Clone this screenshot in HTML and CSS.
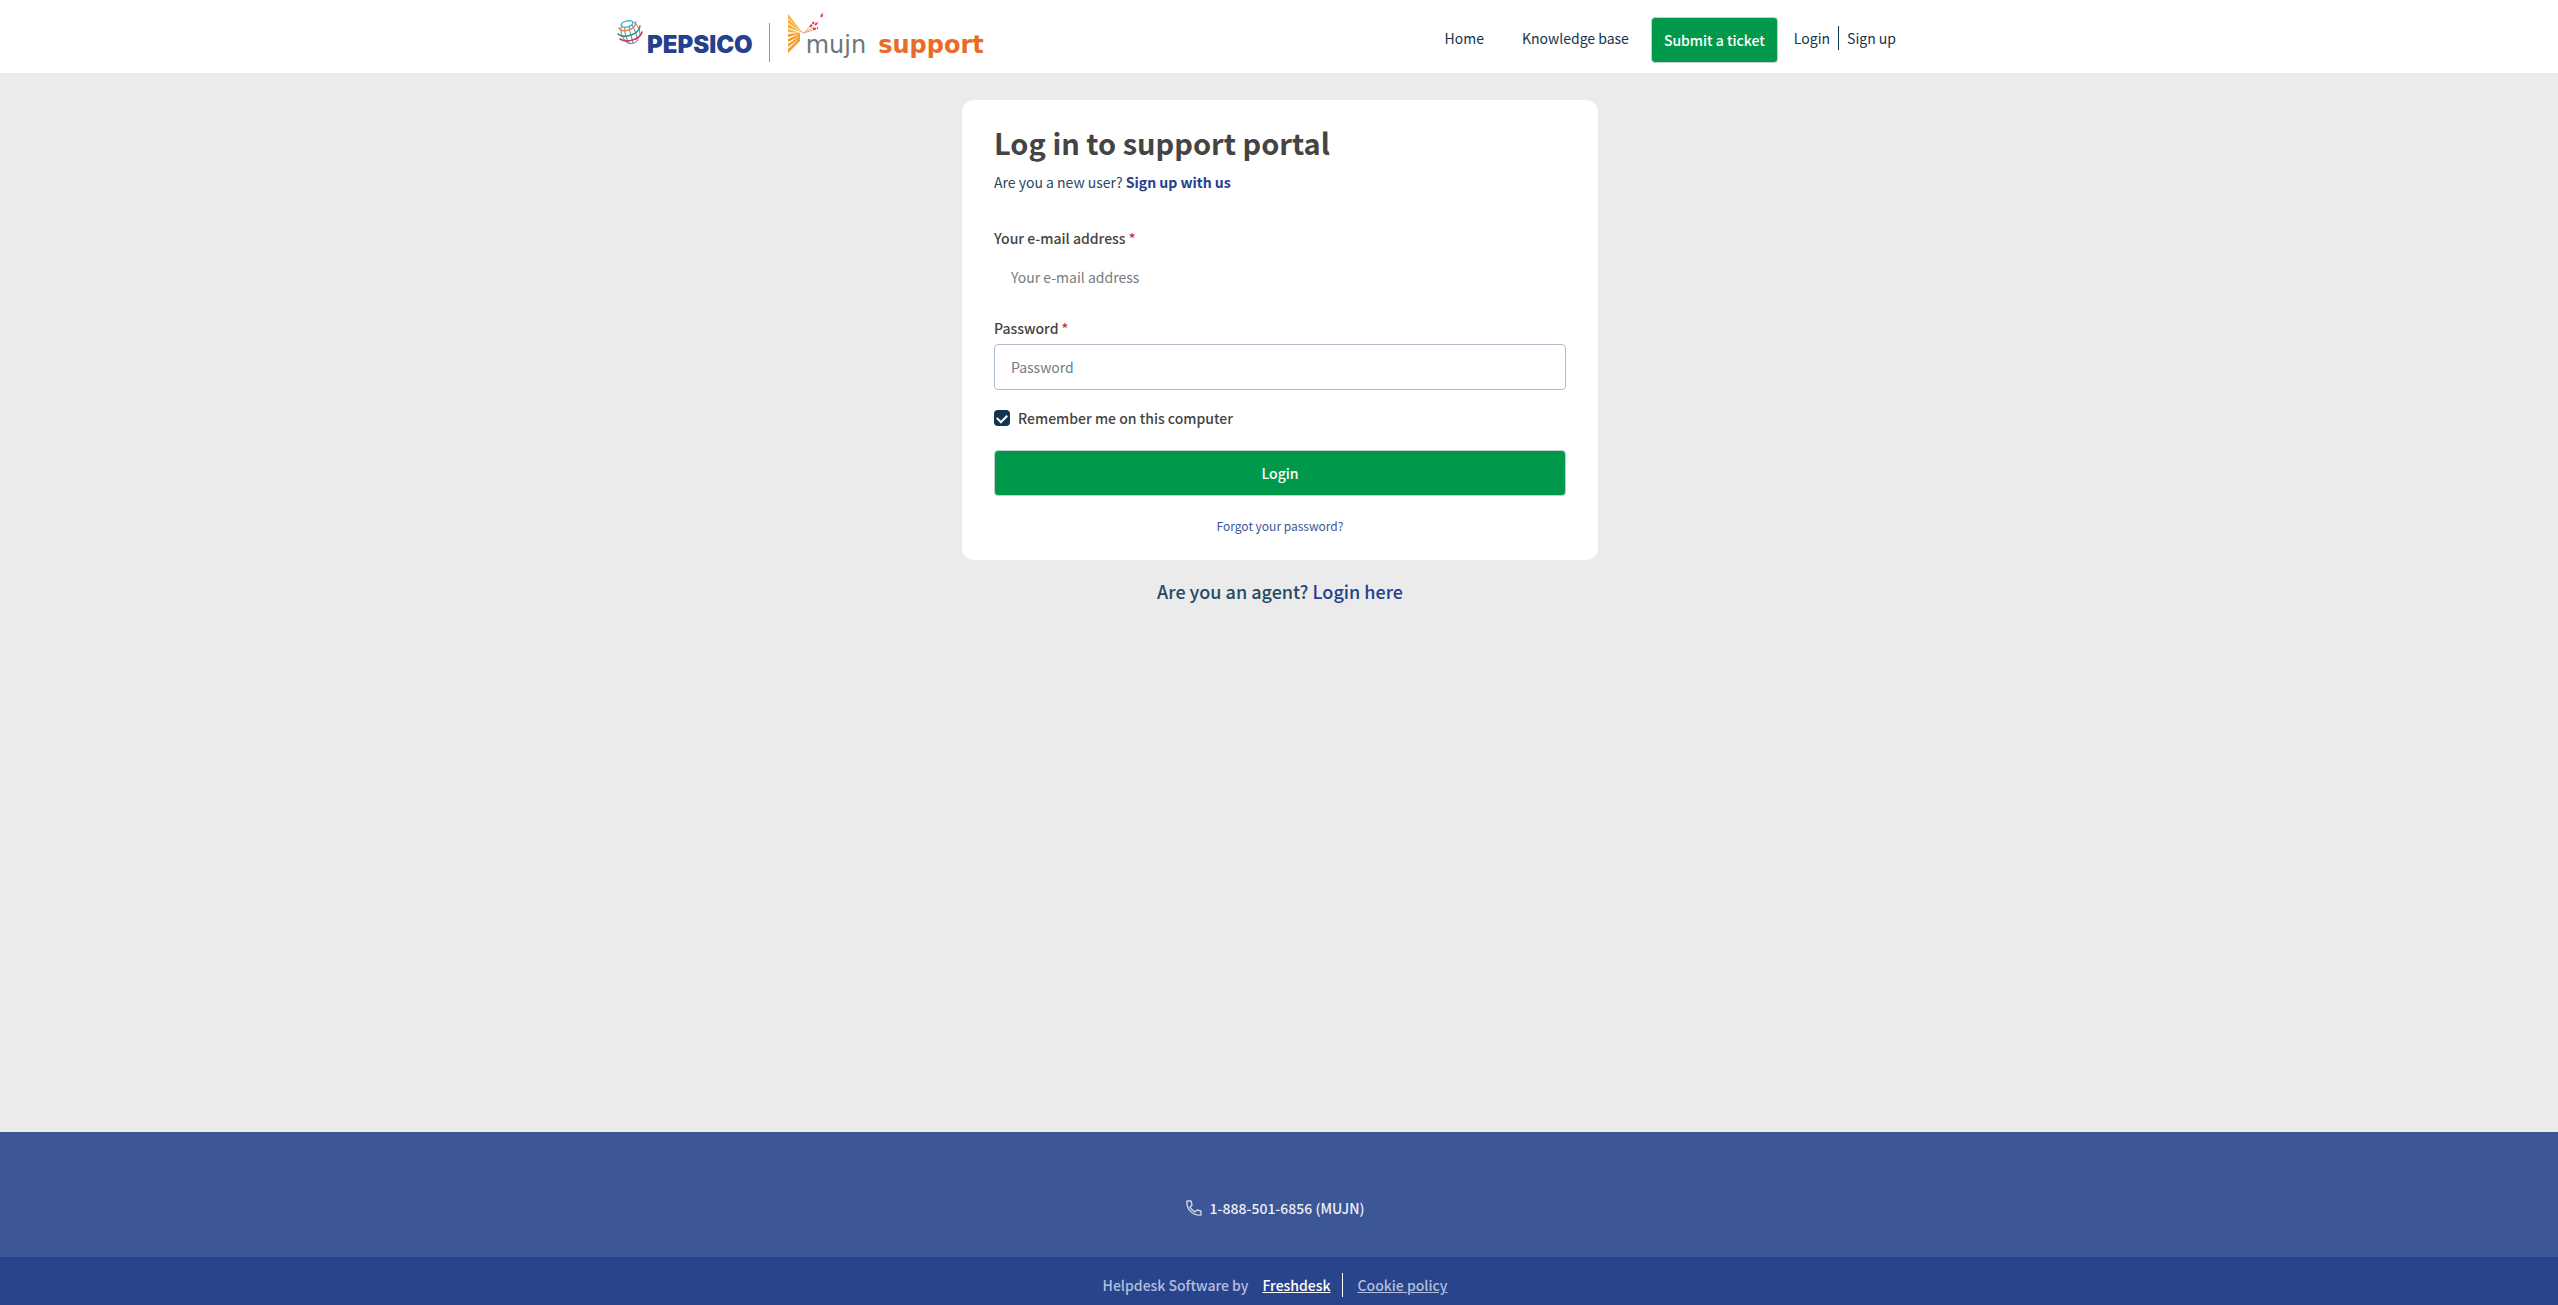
FILE: index.html
```html
<!DOCTYPE html>
<html lang="en">

<head>
    <meta charset="UTF-8">
    <meta name="viewport" content="width=device-width, initial-scale=1.0">
    <title>Log in : MUJN Support</title>
    <link rel="stylesheet" href="styles.css">
</head>

<body>
    <header class="header">
        <div class="header-inner">
            <a class="logo" href="#" aria-label="Support home">
                <svg class="globe" viewBox="0 0 26 28" fill="none" stroke-linecap="round">
                    <!-- meridians -->
                    <g stroke="#5f7bb8" stroke-width="1">
                        <path d="M5 7C2 13 5 21 11 25" />
                        <path d="M8 9C7 15 9 21 13 26" />
                        <path d="M12 9C13 15 15 20 16 25" />
                        <path d="M15 7C18 12 20 17 20 22" />
                        <path d="M17 4C21 8 23 12 23 17" />
                        <path d="M8 23C12 27 18 26 21 22" />
                    </g>
                    <!-- rings -->
                    <ellipse cx="10" cy="6" rx="6" ry="3" stroke="#3fb2e3" stroke-width="1.5" transform="rotate(-16 10 6)" />
                    <path d="M2 10C4 15 18 13 19 4" stroke="#ef8534" stroke-width="1.6" />
                    <path d="M1 16C6 21 22 17 23 8" stroke="#1fa05a" stroke-width="1.6" />
                    <path d="M3 21C9 25 23 22 25 14" stroke="#e0345a" stroke-width="1.6" />
                </svg>
                <span class="pepsico">PEPSICO</span>
                <span class="logo-divider"></span>
                <svg class="fan" viewBox="0 0 38 44">
                    <path fill="#f8b133" d="M2 4L16 22L2 8zM2 9L16 22L2 13zM2 14L15 22L2 18zM2 19L14 23L2 22z" />
                    <path fill="#f39b2c" d="M2 24L14 23V24L2 27zM2 29L14 24V26L2 32zM2 34L14 26V28L2 37zM2 39L14 28V31L2 43z" />
                    <path fill="none" stroke="#f3a08c" stroke-width="1" d="M14 21L18 23L26 14M18 23L28 17M18 23L30 19" />
                    <path fill="none" stroke="#e63946" stroke-width="2" stroke-dasharray="3 1" d="M24 17L28 12M27 19L32 18M29 15L32 12M35 7L37 3" />
                </svg>
                <span class="mujn">mujn</span>
                <span class="support">support</span>
            </a>
            <nav class="nav">
                <a class="nav-link" href="#">Home</a>
                <a class="nav-link" href="#">Knowledge base</a>
                <a class="btn btn-ticket" href="#">Submit a ticket</a>
                <a class="nav-login" href="#">Login</a>
                <a class="nav-signup" href="#">Sign up</a>
            </nav>
        </div>
    </header>

    <main class="main">
        <section class="card">
            <h1>Log in to support portal</h1>
            <p class="new-user">Are you a new user? <a href="#">Sign up with us</a></p>
            <form>
                <label class="field-label" for="email">Your e-mail address <span class="required">*</span></label>
                <input class="field field-plain" type="email" id="email" placeholder="Your e-mail address">
                <label class="field-label" for="password">Password <span class="required">*</span></label>
                <input class="field" type="password" id="password" placeholder="Password">
                <div class="remember">
                    <input type="checkbox" id="remember" checked>
                    <label for="remember">Remember me on this computer</label>
                </div>
                <button class="btn btn-login" type="submit">Login</button>
                <a class="forgot" href="#">Forgot your password?</a>
            </form>
        </section>
        <p class="agent">Are you an agent? <a href="#">Login here</a></p>
    </main>

    <footer>
        <div class="footer-contact">
            <svg class="phone" viewBox="0 0 16 16" fill="none" stroke="#cdd4e6" stroke-width="1.4" stroke-linejoin="round">
                <path d="M1 1H5L6 5L4 7C5 9 7 11 9 12L11 10L15 11V15C7 16 0 9 1 1z" />
            </svg>
            <a href="#">1-888-501-6856 (MUJN)</a>
        </div>
        <div class="footer-bottom">
            <span class="helpdesk">Helpdesk Software by</span>
            <a class="freshdesk" href="#">Freshdesk</a>
            <a class="cookie" href="#">Cookie policy</a>
        </div>
    </footer>
</body>

</html>
```

FILE: styles.css
```css
* {
    box-sizing: border-box;
}

body {
    display: flex;
    flex-direction: column;
    min-height: 100vh;
    margin: 0;
    background: #ebebeb;
    color: #264966;
    font-family: "Noto Sans CJK SC", "Noto Sans", sans-serif;
    font-size: 14px;
    line-height: 24px;
}

a {
    color: inherit;
    text-decoration: none;
}

.header {
    background: #fff;
}

.header-inner {
    display: flex;
    align-items: center;
    justify-content: space-between;
    max-width: 1324px;
    min-height: 73px;
    margin: 0 auto;
    padding-right: 45px;
}

.logo {
    display: flex;
    align-items: center;
}

.globe {
    width: 26px;
    height: 28px;
    margin-bottom: 9px;
}

.pepsico {
    margin: 16px 16px 0 4px;
    color: #24408e;
    font: 900 24px/24px Inter, sans-serif;
}

.logo-divider {
    height: 39px;
    margin-top: 11px;
    border-left: 1px solid #8f979c;
}

.fan {
    width: 38px;
    height: 44px;
    margin: 0 0 9px 16px;
}

.mujn,
.support {
    margin-top: 16px;
    font: 24px/28px "DejaVu Sans", sans-serif;
}

.mujn {
    margin-left: -18px;
    color: #6b777d;
}

.support {
    margin-left: 12px;
    color: #eb6a28;
    font-weight: bold;
}

.nav {
    display: flex;
    align-items: center;
    padding-top: 2px;
    color: #12344d;
}

.nav-link {
    margin-right: 38px;
}

.nav-link + .btn-ticket {
    margin-left: -16px;
}

.btn {
    border: 1px solid #c4d2cf;
    border-radius: 4px;
    background: #00994c;
    color: #fff;
    font: inherit;
    font-weight: 500;
}

.btn-ticket {
    margin: 4px 16px 0 0;
    padding: 10px 12px;
}

.nav-login {
    padding-right: 8px;
    border-right: 1px solid #12344d;
}

.nav-signup {
    padding-left: 8px;
}

.main {
    flex: 1;
    padding: 27px 16px 27px 18px;
}

.card {
    max-width: 636px;
    margin: 0 auto;
    padding: 22px 32px;
    border-radius: 12px;
    background: #fff;
}

h1 {
    margin: 0 0 8px;
    color: #444;
    font-size: 29px;
    line-height: 40px;
}

.new-user {
    margin: 0 0 32px;
}

.new-user a {
    color: #24408e;
    font-weight: 700;
}

.field-label {
    display: block;
    margin-bottom: 4px;
    color: #444;
    font-weight: 500;
}

.required {
    color: #d72d30;
}

.field {
    display: block;
    width: 100%;
    height: 46px;
    margin-bottom: 16px;
    padding: 0 16px;
    border: 1px solid #afbdca;
    border-radius: 4px;
    background: #fff;
    font: inherit;
}

.field::placeholder {
    color: #757b82;
}

.field-plain {
    border-color: transparent;
}

.remember {
    display: flex;
    align-items: center;
    gap: 8px;
    margin-bottom: 20px;
    color: #444;
    font-weight: 500;
}

.remember input {
    display: grid;
    place-items: center;
    width: 16px;
    height: 16px;
    margin: 0;
    border-radius: 4px;
    background: #12344d;
    appearance: none;
}

.remember input:checked::before {
    content: "";
    width: 8px;
    height: 5px;
    margin-bottom: 2px;
    border: solid #fff;
    border-width: 0 0 2px 2px;
    transform: rotate(-45deg);
}

.btn-login {
    display: block;
    width: 100%;
    height: 46px;
    margin-bottom: 18px;
}

.forgot {
    display: block;
    color: #3d5596;
    font-size: 12px;
    text-align: center;
}

.agent {
    margin: 16px 0 0;
    font-size: 18px;
    font-weight: 500;
    line-height: 30px;
    text-align: center;
}

.agent a {
    color: #24408e;
}

.footer-contact,
.footer-bottom {
    display: flex;
    align-items: center;
    justify-content: center;
    padding-right: 8px;
}

.footer-contact {
    gap: 8px;
    min-height: 125px;
    padding-top: 26px;
    background: #3d5697;
    color: #eceff6;
    font-weight: 500;
}

.phone {
    width: 16px;
    height: 16px;
}

.footer-bottom {
    min-height: 48px;
    padding-top: 8px;
    background: #28448c;
    color: #b3bedb;
    font-weight: 500;
}

.footer-bottom a {
    text-decoration: underline;
}

.freshdesk {
    margin-left: 14px;
    padding-right: 12px;
    border-right: 1px solid #fff;
    color: #fff;
}

.cookie {
    margin-left: 14px;
}
```
